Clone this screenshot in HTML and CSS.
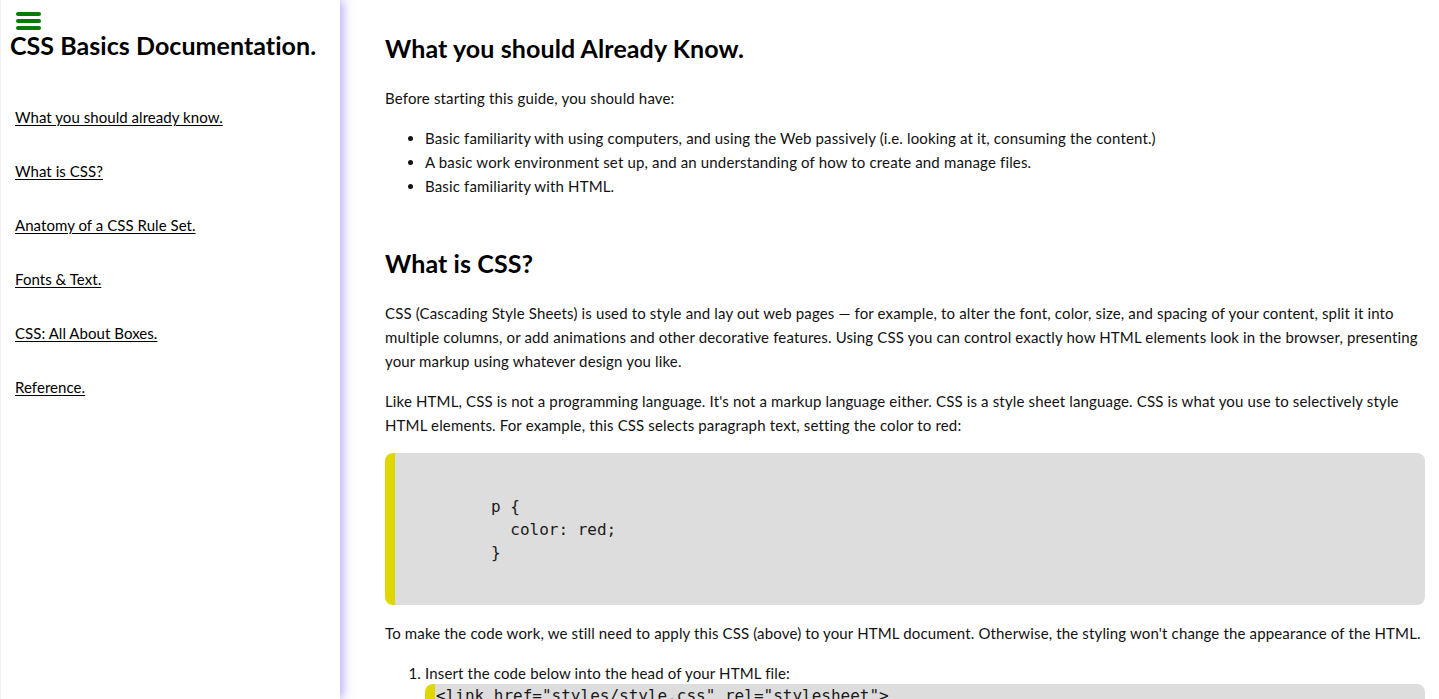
FILE: index.html
```html
<!DOCTYPE html>
<html lang="en">
<head>
<meta charset="utf-8">
<title>CSS Basics Documentation.</title>
<link rel="stylesheet" href="styles.css">
</head>
<body>
<div class="page">
  <nav class="sidebar" id="navbar">
    <div class="menu-icon" aria-label="menu">
      <span class="bar"></span><span class="bar"></span><span class="bar"></span>
    </div>
    <header class="side-title">CSS Basics Documentation.</header>
    <ul class="nav-list">
      <li><a class="nav-link" href="#what_you_should_already_know">What you should already know.</a></li>
      <li><a class="nav-link" href="#what_is_css">What is CSS?</a></li>
      <li><a class="nav-link" href="#anatomy">Anatomy of a CSS Rule Set.</a></li>
      <li><a class="nav-link" href="#fonts">Fonts &amp; Text.</a></li>
      <li><a class="nav-link" href="#boxes">CSS: All About Boxes.</a></li>
      <li><a class="nav-link" href="#reference">Reference.</a></li>
    </ul>
  </nav>
  <main class="main" id="main-doc">
    <section class="main-section" id="what_you_should_already_know">
      <h2 class="sec-title">What you should Already Know.</h2>
      <p class="text">Before starting this guide, you should have:</p>
      <ul class="bullets">
        <li>Basic familiarity with using computers, and using the Web passively (i.e. looking at it, consuming the content.)</li>
        <li>A basic work environment set up, and an understanding of how to create and manage files.</li>
        <li>Basic familiarity with HTML.</li>
      </ul>
    </section>
    <section class="main-section" id="what_is_css">
      <h2 class="sec-title">What is CSS?</h2>
      <p class="text">CSS (Cascading Style Sheets) is used to style and lay out web pages — for example, to alter the font, color, size, and spacing of your content, split it into multiple columns, or add animations and other decorative features. Using CSS you can control exactly how HTML elements look in the browser, presenting your markup using whatever design you like.</p>
      <p class="text">Like HTML, CSS is not a programming language. It's not a markup language either. CSS is a style sheet language. CSS is what you use to selectively style HTML elements. For example, this CSS selects paragraph text, setting the color to red:</p>
      <pre class="code code-big">p {
  color: red;
}</pre>
      <p class="text">To make the code work, we still need to apply this CSS (above) to your HTML document. Otherwise, the styling won't change the appearance of the HTML.</p>
      <ol class="steps">
        <li>Insert the code below into the head of your HTML file:
          <pre class="code code-small">&lt;link href="styles/style.css" rel="stylesheet"&gt;</pre>
        </li>
      </ol>
    </section>
  </main>
</div>
</body>
</html>
```

FILE: styles.css
```css
* { box-sizing: border-box; }

html, body {
  margin: 0;
  padding: 0;
}

body {
  font-family: Lato, "Open Sans", sans-serif;
  color: #111;
  background: #fff;
}

.page {
  display: flex;
  height: 100vh;
  overflow: hidden;
}

.sidebar {
  position: relative;
  z-index: 1;
  flex: 0 0 340px;
  width: 340px;
  height: 100vh;
  background: #fff;
  border-left: 1px solid #f0f0f0;
  box-shadow: 3px 0 10px rgba(130, 100, 255, 0.55);
  padding: 12px 0 0 0;
}

.menu-icon {
  display: flex;
  flex-direction: column;
  gap: 3px;
  width: 25px;
  margin-left: 15px;
  height: 19px;
}

.bar {
  display: block;
  height: 4px;
  width: 25px;
  border-radius: 2px;
  background: #0a7a0a;
}

.side-title {
  margin: 0 0 0 9px;
  font-size: 25px;
  line-height: 28px;
  font-weight: 700;
  color: #000;
  letter-spacing: 0.05px;
}

.nav-list {
  list-style: none;
  margin: 48px 0 0 0;
  padding: 0 0 0 14px;
  display: flex;
  flex-direction: column;
  gap: 34px;
}

.nav-link {
  font-size: 15px;
  line-height: 20px;
  color: #000;
  text-decoration: underline;
  text-underline-offset: 2px;
  letter-spacing: 0.05px;
}

.main {
  flex: 1;
  min-width: 0;
  overflow: hidden;
  padding: 0 14px 0 45px;
}

.sec-title {
  font-size: 25px;
  line-height: 30px;
  font-weight: 700;
  color: #000;
  margin: 50px 0 23px;
  letter-spacing: 0.1px;
}

.main-section:first-child .sec-title {
  margin-top: 33px;
}

.text {
  font-size: 15px;
  line-height: 24px;
  letter-spacing: 0.15px;
  margin: 16px 0;
}

.sec-title + .text {
  margin-top: 0;
}

.bullets, .steps {
  font-size: 15px;
  line-height: 24px;
  letter-spacing: 0.15px;
  margin: 16px 0;
  padding-left: 40px;
}

.code {
  font-family: "DejaVu Sans Mono", "Liberation Mono", monospace;
  font-size: 16px;
  line-height: 23px;
  letter-spacing: 0;
  color: #1a1a1a;
  background: #dddddd;
  border-left: 10px solid #dfd800;
  border-radius: 8px;
  margin: 16px 0;
  white-space: pre;
}

.code-big {
  padding: 42px 0 41px 96px;
}

.code-small {
  margin: -1px 0 0 0;
  padding: 0 0 0 1px;
  line-height: 24px;
}
```
